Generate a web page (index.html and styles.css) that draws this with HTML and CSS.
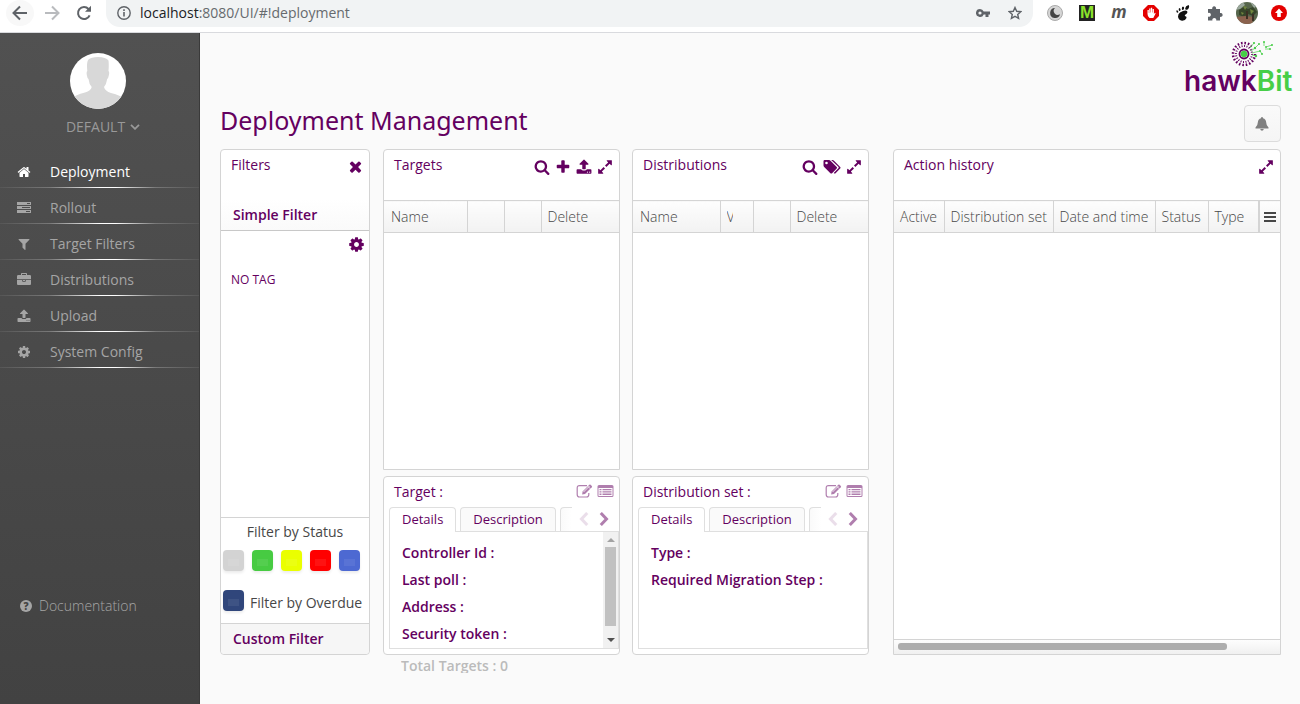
FILE: index.html
```html
<!DOCTYPE html>
<html lang="en">
<head>
<meta charset="utf-8">
<title>hawkBit - Deployment Management</title>
<link rel="stylesheet" href="styles.css">
</head>
<body>
<svg class="sprite" aria-hidden="true">
  <symbol id="i-search" viewBox="0 0 1792 1792"><path d="M1216 832q0-185-131.5-316.5t-316.5-131.5-316.5 131.5-131.5 316.5 131.5 316.5 316.5 131.5 316.5-131.5 131.5-316.5zm512 832q0 52-38 90t-90 38q-54 0-90-38l-343-342q-179 124-399 124-143 0-273.5-55.5t-225-150-150-225-55.5-273.5 55.5-273.5 150-225 225-150 273.5-55.5 273.5 55.5 225 150 150 225 55.5 273.5q0 220-124 399l343 343q37 37 37 90z"/></symbol>
  <symbol id="i-plus" viewBox="0 0 1792 1792"><path d="M1600 736v192q0 40-28 68t-68 28h-416v416q0 40-28 68t-68 28h-192q-40 0-68-28t-28-68v-416h-416q-40 0-68-28t-28-68v-192q0-40 28-68t68-28h416v-416q0-40 28-68t68-28h192q40 0 68 28t28 68v416h416q40 0 68 28t28 68z"/></symbol>
  <symbol id="i-upload" viewBox="0 0 1792 1792"><path d="M1344 1472q0-26-19-45t-45-19-45 19-19 45 19 45 45 19 45-19 19-45zm256 0q0-26-19-45t-45-19-45 19-19 45 19 45 45 19 45-19 19-45zm128-224v320q0 40-28 68t-68 28h-1472q-40 0-68-28t-28-68v-320q0-40 28-68t68-28h427q21 56 70.500 92t110.500 36h256q61 0 110.500-36t70.500-92h427q40 0 68 28t28 68zm-325-648q-17 40-59 40h-256v448q0 26-19 45t-45 19h-256q-26 0-45-19t-19-45v-448h-256q-42 0-59-40-17-39 14-69l448-448q18-19 45-19t45 19l448 448q31 30 14 69z"/></symbol>
  <symbol id="i-expand" viewBox="0 0 1792 1792"><path d="M883 1056q0 13-10 23l-332 332 144 144q19 19 19 45t-19 45-45 19h-448q-26 0-45-19t-19-45v-448q0-26 19-45t45-19 45 19l144 144 332-332q10-10 23-10t23 10l114 114q10 10 10 23zm781-864v448q0 26-19 45t-45 19-45-19l-144-144-332 332q-10 10-23 10t-23-10l-114-114q-10-10-10-23t10-23l332-332-144-144q-19-19-19-45t19-45 45-19h448q26 0 45 19t19 45z"/></symbol>
  <symbol id="i-times" viewBox="0 0 1792 1792"><path d="M1490 1322q0 40-28 68l-136 136q-28 28-68 28t-68-28l-294-294-294 294q-28 28-68 28t-68-28l-136-136q-28-28-28-68t28-68l294-294-294-294q-28-28-28-68t28-68l136-136q28-28 68-28t68 28l294 294 294-294q28-28 68-28t68 28l136 136q28 28 28 68t-28 68l-294 294 294 294q28 28 28 68z"/></symbol>
  <symbol id="i-cog" viewBox="0 0 1792 1792"><path d="M1152 896q0-106-75-181t-181-75-181 75-75 181 75 181 181 75 181-75 75-181zm512-109v222q0 12-8 23t-20 13l-185 28q-19 54-39 91 35 50 107 138 10 12 10 25t-9 23q-27 37-99 108t-94 71q-12 0-26-9l-138-108q-44 23-91 38-16 136-29 186-7 28-36 28h-222q-14 0-24.500-8.500t-11.500-21.500l-28-184q-49-16-90-37l-141 107q-10 9-25 9-14 0-25-11-126-114-165-168-7-10-7-23 0-12 8-23 15-21 51-66.500t54-70.500q-27-50-41-99l-183-27q-13-2-21-12.500t-8-23.500v-222q0-12 8-23t19-13l186-28q14-46 39-92-40-57-107-138-10-12-10-24 0-10 9-23 26-36 98.500-107.500t94.500-71.500q13 0 26 10l138 107q44-23 91-38 16-136 29-186 7-28 36-28h222q14 0 24.500 8.500t11.500 21.500l28 184q49 16 90 37l142-107q9-9 24-9 13 0 25 10 129 119 165 170 7 8 7 22 0 12-8 23-15 21-51 66.500t-54 70.500q26 50 41 98l183 28q13 2 21 12.500t8 23.500z"/></symbol>
  <symbol id="i-home" viewBox="0 0 1792 1792"><path d="M1472 992v480q0 26-19 45t-45 19h-384v-384h-256v384h-384q-26 0-45-19t-19-45v-480q0-1 .5-3t.5-3l575-474 575 474q1 2 1 6zm223-69l-62 74q-8 9-21 11h-3q-13 0-21-7l-692-577-692 577q-12 8-24 7-13-2-21-11l-62-74q-8-10-7-23.500t11-21.500l719-599q32-26 76-26t76 26l244 204v-195q0-14 9-23t23-9h192q14 0 23 9t9 23v408l219 182q10 8 11 21.500t-7 23.500z"/></symbol>
  <symbol id="i-filter" viewBox="0 0 1792 1792"><path d="M1595 295q17 41-14 70l-493 493v742q0 42-39 59-13 5-25 5-27 0-45-19l-256-256q-19-19-19-45v-486l-493-493q-31-29-14-70 17-39 59-39h1280q42 0 59 39z"/></symbol>
  <symbol id="i-case" viewBox="0 0 1792 1792"><path d="M640 256h512v-128h-512v128zm1152 640v480q0 66-47 113t-113 47h-1472q-66 0-113-47t-47-113v-480h672v160q0 26 19 45t45 19h320q26 0 45-19t19-45v-160h672zm-768 0v128h-256v-128h256zm768-480v384h-1792v-384q0-66 47-113t113-47h352v-160q0-40 28-68t68-28h576q40 0 68 28t28 68v160h352q66 0 113 47t47 113z"/></symbol>
  <symbol id="i-tasks" viewBox="0 0 14 14"><path fill-rule="evenodd" d="M0 1h14v3H0zM10 2v1h3v-1zM0 5h14v3H0zM5 6v1h8v-1zM0 9h14v3H0zM9 10v1h4v-1z"/></symbol>
  <symbol id="i-tags" viewBox="0 0 18 16"><path fill-rule="evenodd" d="M.5 2.200Q.5 1 1.700 1H6q.8 0 1.500.7l6.200 6.200q.8.800 0 1.600l-4.600 4.700q-.8.800-1.700 0L1.200 8Q.5 7.200.5 6.500zM3.500 2.700a1.300 1.300 0 1 0 0 2.600 1.300 1.300 0 0 0 0-2.600z"/><path d="M8.200 1h1.300q.8 0 1.500.7l6.200 6.200q.8.800 0 1.600l-4.600 4.700q-.9.900-1.900-.2l4.700-4.700q.7-.7 0-1.500z"/></symbol>
  <symbol id="i-edit" viewBox="0 0 16 14"><path fill="none" stroke="currentColor" stroke-width="1.200" d="M10.500 1.600H3Q.7 1.600.7 4v6.500Q.7 13 3 13h7q2.300 0 2.300-2.500V9"/><path d="M5.600 10.600l.5-3L12.800.8q.6-.6 1.300 0l1.200 1.200q.6.700 0 1.300L8.500 10z"/><path stroke="#fff" stroke-width=".8" d="M7 8l6-6M11.500 2.500l2.300 2.300"/></symbol>
  <symbol id="i-list" viewBox="0 0 16 14"><path fill-rule="evenodd" d="M1.500 1h13q1.500 0 1.500 1.500v9q0 1.500-1.500 1.500h-13Q0 13 0 11.500v-9Q0 1 1.500 1zM1 4v7.500q0 .5.500.5h13q.5 0 .5-.5V4z"/><path d="M2 5h2v1.300H2zM5 5h9v1.300H5zM2 7.300h2v1.300H2zM5 7.300h9v1.300H5zM2 9.600h2v1.300H2zM5 9.600h9v1.300H5z"/></symbol>
  <symbol id="i-bell" viewBox="0 0 14 14"><path d="M7 0q1 0 1 1.200Q11 2 11.200 5.500q.1 3.300 2.300 5V11.500H.5v-1q2.200-1.700 2.300-5Q3 2 6 1.200 6 0 7 0zM5.200 12h3.600Q8.500 13.800 7 13.800T5.200 12z"/></symbol>
  <symbol id="i-left" viewBox="0 0 10 14"><path fill="none" stroke="currentColor" stroke-width="3" d="M8.200 1L2.500 7l5.700 6"/></symbol>
  <symbol id="i-right" viewBox="0 0 10 14"><path fill="none" stroke="currentColor" stroke-width="3" d="M1.800 1l5.700 6-5.700 6"/></symbol>
</svg>

<header class="browser">
  <button class="nav-btn halo" aria-label="Back"><svg width="16" height="16" viewBox="0 0 16 16"><path class="ln" d="M15 8H2M8 1.500L1.500 8 8 14.500"/></svg></button>
  <button class="nav-btn faded" aria-label="Forward"><svg width="16" height="16" viewBox="0 0 16 16"><path class="ln" d="M1 8h13M8 1.500L14.500 8 8 14.500"/></svg></button>
  <button class="nav-btn" aria-label="Reload"><svg width="16" height="16" viewBox="0 0 16 16"><path class="ln" d="M13.600 10.300A6 6 0 1 1 12.500 4L14 5.500"/><path d="M15 .8v6H9z"/></svg></button>
  <div class="address">
    <svg width="14" height="14" viewBox="0 0 14 14"><circle class="ln thin" cx="7" cy="7" r="6.200"/><path d="M6.200 6h1.600v4.500H6.200zM6.200 3.300h1.600v1.600H6.200z"/></svg>
    <span class="url"><b>localhost</b>:8080/UI/#!deployment</span>
    <svg class="key" width="14" height="10" viewBox="0 0 14 10"><path fill-rule="evenodd" d="M4 1a4 4 0 0 1 3.700 2.500H14v3h-1.500V9h-3V6.500H7.700A4 4 0 1 1 4 1zm0 2.400a1.600 1.600 0 1 0 0 3.200 1.600 1.600 0 0 0 0-3.200z"/></svg>
    <svg width="14" height="14" viewBox="0 0 14 14"><path class="ln thin" d="M7 1.500l1.700 3.800 4.100.4-3.100 2.700.9 4L7 10.300l-3.600 2.100.9-4L1.200 5.700l4.100-.4z"/></svg>
  </div>
  <div class="exts">
    <svg width="16" height="16" viewBox="0 0 16 16"><circle cx="8" cy="8" r="7.500" fill="#d5d5d5" stroke="#aaa"/><path fill="#444" d="M8 3a5 5 0 1 0 5 6.200A4 4 0 0 1 8 3z"/></svg>
    <span class="ext-m">M</span>
    <span class="ext-i">m</span>
    <svg width="16" height="16" viewBox="0 0 16 16"><path fill="#e40000" d="M5 0h6l5 5v6l-5 5H5l-5-5V5z"/><path fill="#fff" d="M4.500 5h1.300v3h.4V3.500h1.300V7.500h.4V2.800h1.300v4.700h.4V4h1.300v5l1-1.200q1 0 .6 1L10.300 13H6.500q-2-1.500-2-4z"/></svg>
    <svg width="14" height="16" viewBox="0 0 14 16"><path fill="#111" d="M12.500 0q1.500 1.500-.5 4.300-3 1.400-2.800-1Q9.500.8 12.500 0zM7 1.500q1.800.5.700 3-1.600 1.200-1.900-.6Q5.700 1.800 7 1.500zM3.500 3q1.600.6 1 2.600-1.400.8-1.800-.7Q2.600 3.300 3.500 3zM.8 5.300q1.500.2 1.600 2Q1.200 8.400.5 7 .1 5.500.8 5.300zM4 7.500q5-3 7-1.500 1.300 1.800-1.500 3.600-1.600 1-.2 1.700 1.500 0 1.200 1.800Q9.300 16 6 15.800q-3.500-.6-4-4Q2 9 4 7.500z"/></svg>
    <svg width="16" height="16" viewBox="0 0 16 16"><path fill="#5f6368" d="M1 4h4.300a2 2 0 1 1 3.700 0H13v4a2 2 0 1 1 0 3.800V15.500H9.200a2 2 0 1 0-3.800 0H1v-4a2 2 0 1 0 0-3.600z"/></svg>
    <svg class="photo" width="22" height="22" viewBox="0 0 22 22"><clipPath id="ph"><circle cx="11" cy="11" r="11"/></clipPath><g clip-path="url(#ph)"><path fill="#56664c" d="M0 0h22v22H0z"/><path fill="#9aa79c" d="M0 2l7-2 2 3-5 4-4 1zM14 0l7 4-3 2z"/><path fill="#36452a" d="M3 8l5-3 4 2 5-2 4 5-4 4-5-2-4 3-5-2z"/><path fill="#70863e" d="M7 4l4 1-2 3zM14 7l4 2-3 3zM5 10l3 1-2 2z"/><path fill="#8b624e" d="M0 15l9-1 9 1-2 7H0z"/><path fill="#3b3024" d="M10 9h2v8h-2zM16 12h2v7h-2z"/></g></svg>
    <svg width="16" height="16" viewBox="0 0 16 16"><circle cx="8" cy="8" r="8" fill="#e40000"/><path fill="#fff" d="M8 3.500l4 4.500H9.800v4H6.200V8H4z"/></svg>
  </div>
</header>

<div class="app">
  <aside class="sidebar">
    <svg class="avatar" width="56" height="56" viewBox="0 0 56 56"><clipPath id="av"><circle cx="28" cy="28" r="28"/></clipPath><circle cx="28" cy="28" r="28" fill="#fff"/><path clip-path="url(#av)" fill="#d8d8d8" d="M28 4q8 0 10.500 3.500Q39 12 38.500 18q1.200 1 .3 4.500-.5 3-1.600 3.500-.7 5-3.200 8 1 4 7 6 10 2.500 13 5.500V58H2V45.500Q5 42 15 39.500q6-2 6.700-5.500-2.700-3-3.200-8-1.200-.5-1.700-4-.5-3.500.5-4-1-9 1.200-11.500Q21 4 28 4z"/></svg>
    <button class="user">DEFAULT <svg width="10" height="6" viewBox="0 0 10 6"><path fill="none" stroke="currentColor" stroke-width="1.800" d="M1 .8l4 4 4-4"/></svg></button>
    <nav class="menu">
      <a href="#!deployment" class="active"><svg><use href="#i-home"/></svg>Deployment</a>
      <a href="#!rollout"><svg><use href="#i-tasks"/></svg>Rollout</a>
      <a href="#!targetfilters"><svg><use href="#i-filter"/></svg>Target Filters</a>
      <a href="#!distributions"><svg><use href="#i-case"/></svg>Distributions</a>
      <a href="#!upload"><svg><use href="#i-upload"/></svg>Upload</a>
      <a href="#!config"><svg><use href="#i-cog"/></svg>System Config</a>
    </nav>
    <a class="docs" href="#docs"><span class="help">?</span>Documentation</a>
  </aside>

  <main class="main">
    <div class="brand">
      <svg width="112" height="56" viewBox="0 0 112 56" role="img" aria-label="hawkBit">
        <g fill="none" stroke="#640060"><circle cx="60" cy="17" r="11" stroke-width="2.500" stroke-dasharray="1.600 1.860"/><circle cx="60" cy="17" r="8" stroke-width="2" stroke-dasharray="1 1.500"/><circle cx="60" cy="17" r="4.500" stroke-width="1.800"/></g>
        <path fill="#fafafa" d="M67 4l9 2v12l-7-2z"/>
        <circle cx="60" cy="17" r="3.200" fill="#47ce47"/>
        <g fill="#47ce47"><circle cx="70" cy="6" r="1.100"/><circle cx="75" cy="7" r="1"/><circle cx="80" cy="5" r="1"/><circle cx="82" cy="10" r="1"/><circle cx="88" cy="8" r="1"/><circle cx="86" cy="12" r="1"/><circle cx="71" cy="11" r="1.200"/><circle cx="76" cy="14" r="1"/><circle cx="72" cy="19" r="1.200"/><circle cx="78" cy="17" r="1"/></g>
        <path fill="none" stroke="#47ce47" stroke-width=".7" d="M66 11l4-5M67 14l4-3 4-4M68 16l8-2M68 18l4 1M76 14l2 3M80 5v4M82 10l6-2M81 12h5"/>
        <text class="logo-text" x="0" y="54"><tspan fill="#640060">hawk</tspan><tspan fill="#47ce47">Bit</tspan></text>
      </svg>
    </div>
    <div class="title-row">
      <h1>Deployment Management</h1>
      <button class="bell" aria-label="Notifications"><svg width="14" height="14"><use href="#i-bell"/></svg></button>
    </div>

    <div class="columns">
      <section class="panel filters">
        <div class="panel-head"><h2>Filters</h2><div class="tools"><button aria-label="Close"><svg><use href="#i-times"/></svg></button></div></div>
        <button class="accordion simple">Simple Filter</button>
        <div class="tags">
          <button class="icon-btn" aria-label="Configure tags"><svg><use href="#i-cog"/></svg></button>
          <button class="notag">NO TAG</button>
        </div>
        <div class="status">
          <p>Filter by Status</p>
          <div class="swatches">
            <button class="sw grey" aria-label="Unknown"></button><button class="sw green" aria-label="In sync"></button><button class="sw yellow" aria-label="Pending"></button><button class="sw red" aria-label="Error"></button><button class="sw blue" aria-label="Registered"></button>
          </div>
          <div class="overdue"><button class="sw navy" id="overdue"></button><label for="overdue">Filter by Overdue</label></div>
        </div>
        <button class="accordion custom">Custom Filter</button>
      </section>

      <div class="stack">
        <section class="panel grid-panel">
          <div class="panel-head"><h2>Targets</h2><div class="tools"><button aria-label="Search"><svg><use href="#i-search"/></svg></button><button aria-label="Add"><svg><use href="#i-plus"/></svg></button><button aria-label="Upload"><svg><use href="#i-upload"/></svg></button><button aria-label="Maximize"><svg><use href="#i-expand"/></svg></button></div></div>
          <table><colgroup><col><col class="c37"><col class="c37"><col class="c78"></colgroup><thead><tr><th>Name</th><th></th><th></th><th>Delete</th></tr></thead></table>
        </section>
        <section class="panel details">
          <div class="details-head"><h2>Target :</h2><div class="tools pale"><button aria-label="Edit"><svg><use href="#i-edit"/></svg></button><button aria-label="Metadata"><svg><use href="#i-list"/></svg></button></div></div>
          <div class="tabs"><button class="tab on">Details</button><button class="tab">Description</button><span class="tab more"></span><span class="arrows"><button class="dim" aria-label="Previous"><svg><use href="#i-left"/></svg></button><button aria-label="Next"><svg><use href="#i-right"/></svg></button></span></div>
          <div class="sheet"><ul><li>Controller Id :</li><li>Last poll :</li><li>Address :</li><li>Security token :</li></ul>
            <div class="vscroll"><i class="up"></i><i class="thumb"></i><i class="down"></i></div></div>
        </section>
      </div>

      <div class="stack">
        <section class="panel grid-panel">
          <div class="panel-head"><h2>Distributions</h2><div class="tools"><button aria-label="Search"><svg><use href="#i-search"/></svg></button><button aria-label="Tags" class="wide"><svg><use href="#i-tags"/></svg></button><button aria-label="Maximize"><svg><use href="#i-expand"/></svg></button></div></div>
          <table><colgroup><col><col class="c33"><col class="c37"><col class="c78"></colgroup><thead><tr><th>Name</th><th><span class="clip">V</span></th><th></th><th>Delete</th></tr></thead></table>
        </section>
        <section class="panel details">
          <div class="details-head"><h2>Distribution set :</h2><div class="tools pale"><button aria-label="Edit"><svg><use href="#i-edit"/></svg></button><button aria-label="Metadata"><svg><use href="#i-list"/></svg></button></div></div>
          <div class="tabs"><button class="tab on">Details</button><button class="tab">Description</button><span class="tab more"></span><span class="arrows"><button class="dim" aria-label="Previous"><svg><use href="#i-left"/></svg></button><button aria-label="Next"><svg><use href="#i-right"/></svg></button></span></div>
          <div class="sheet"><ul><li>Type :</li><li>Required Migration Step :</li></ul></div>
        </section>
      </div>

      <section class="panel grid-panel history">
        <div class="panel-head"><h2>Action history</h2><div class="tools"><button aria-label="Maximize"><svg><use href="#i-expand"/></svg></button></div></div>
        <table><colgroup><col class="c50"><col class="c109"><col class="c102"><col class="c53"><col><col class="c21"></colgroup><thead><tr><th>Active</th><th>Distribution set</th><th>Date and time</th><th>Status</th><th>Type</th><th class="burger"><button aria-label="Columns"><svg width="12" height="10" viewBox="0 0 12 10"><path d="M0 0h12v2H0zM0 4h12v2H0zM0 8h12v2H0z"/></svg></button></th></tr></thead></table>
        <div class="hscroll"><i></i></div>
      </section>
    </div>
    <footer class="total">Total Targets : 0</footer>
  </main>
</div>
</body>
</html>
```
FILE: styles.css
```css
* { box-sizing: border-box; }
body {
  margin: 0;
  min-height: 100vh;
  display: flex;
  flex-direction: column;
  font: 14px/20px "Open Sans", sans-serif;
  color: #474747;
  background: #fafafa;
}
button { font: inherit; color: inherit; background: none; border: 0; padding: 0; margin: 0; }
a { color: inherit; text-decoration: none; }
h1, h2, p, ul { margin: 0; padding: 0; font-weight: 400; list-style: none; }
svg { display: block; fill: currentColor; flex: none; }
.sprite { position: absolute; width: 0; height: 0; }

/* browser toolbar */
.browser {
  display: flex;
  align-items: center;
  height: 33px;
  padding: 0 5px 6px 6px;
  border-bottom: 1px solid #d9dade;
  background: #fff;
  color: #5f6368;
}
.ln { fill: none; stroke: currentColor; stroke-width: 2; }
.ln.thin { stroke-width: 1.4; }
.nav-btn { width: 28px; height: 26px; margin-right: 4px; display: flex; align-items: center; justify-content: center; }
.halo { background: #f8f8f8; border-radius: 50%; }
.faded { color: #b9bbbe; }
.address {
  flex: 1;
  display: flex;
  align-items: center;
  height: 27px;
  padding: 0 11px;
  margin-left: 4px;
  background: #f1f3f4;
  border-radius: 0 0 14px 14px;
}
.url { flex: 1; margin-left: 9px; font: 14px/20px "Open Sans", sans-serif; color: #666a6e; }
.url b { font-weight: 400; color: #202124; }
.key { margin-right: 18px; }
.exts { display: grid; grid-template-columns: repeat(8, 32px); align-items: center; justify-items: center; margin-left: 6px; }
.ext-m { width: 16px; height: 16px; background: #222; color: #8be22a; font: bold 17px/16px "Liberation Sans", sans-serif; text-align: center; }
.ext-i { font: italic bold 17px/16px "Open Sans", sans-serif; color: #555; padding-bottom: 2px; }

.app { flex: 1; display: flex; }

/* sidebar */
.sidebar {
  width: 200px;
  flex: none;
  display: flex;
  flex-direction: column;
  padding-top: 20px;
  border-right: 1px solid #3a3a3a;
  background: linear-gradient(#515151, #424242);
  color: #a5a5a5;
}
.avatar { margin-left: 70px; }
.user { display: flex; align-items: center; align-self: center; gap: 5px; margin: 8px 0 15px 7px; color: #999; }
.menu a {
  display: flex;
  align-items: center;
  height: 36px;
  padding: 4px 0 0 17px;
  gap: 19px;
  border-bottom: 1px solid;
  border-image: linear-gradient(90deg, #555, #777 25%, #fff 50%, #fff 58%, #777 78%, #555) 1;
}
.menu svg { width: 14px; height: 14px; }
.menu .active { color: #fff; }
.docs { display: flex; align-items: center; gap: 7px; margin-top: auto; padding: 0 0 88px 20px; font-weight: 300; }
.help { width: 12px; height: 12px; border-radius: 50%; background: #a5a5a5; color: #444; font-weight: 800; font-size: 10px; line-height: 12px; text-align: center; }

/* main area */
.main { flex: 1; min-width: 0; display: flex; flex-direction: column; color: #640060; }
.brand { display: flex; justify-content: flex-end; padding: 4px 4px 0 0; }
.logo-text { font: 600 28px "Inter", sans-serif; }
.title-row { display: flex; justify-content: space-between; align-items: center; margin: 12px 19px 7px 20px; }
h1 { font-family: "Noto Sans", "Open Sans", sans-serif; font-size: 25px; line-height: 30px; padding-bottom: 7px; }
h2 { font-size: 14px; line-height: 20px; }
.bell {
  width: 37px; height: 37px; padding-right: 2px; display: grid; place-items: center;
  border: 1px solid #dcdcdc; border-radius: 4px; background: linear-gradient(#fafafa, #f5f5f5); color: #808080;
}
.columns {
  flex: 1;
  display: grid;
  grid-template-columns: 151px minmax(0, 237fr) minmax(0, 237fr) minmax(0, 400fr);
  gap: 12px;
  margin: 0 19px 0 20px;
}
.stack { display: flex; flex-direction: column; gap: 6px; }
.panel { background: #fff; border: 1px solid #d4d4d4; border-radius: 4px; display: flex; flex-direction: column; }
.grid-panel { border-radius: 4px 4px 0 0; flex: 1; }
.filters { width: 150px; }
.history { margin-left: 12px; }
.panel-head { display: flex; justify-content: space-between; padding: 5px 6px 0 10px; height: 50px; }
.filters .panel-head { height: 49px; padding-right: 5px; }
.tools { display: flex; gap: 5px; height: 23px; align-items: center; }
.tools svg { width: 16px; height: 16px; }
.tools .wide svg { width: 18px; }
.filters .tools svg { width: 17px; height: 17px; }
.accordion { text-align: left; padding: 0 12px; font-weight: 600; height: 32px; }
.simple { border-bottom: 1px solid #c8c8c8; background: linear-gradient(#fff, #fafafa); }
.tags { flex: 1; display: flex; flex-direction: column; align-items: flex-start; }
.icon-btn { align-self: flex-end; margin: 5px 4px 0 0; }
.icon-btn svg { width: 17px; height: 17px; }
.notag { margin: 17px 0 0 10px; font-size: 12px; }
.status { border-top: 1px solid #d4d4d4; color: #474747; padding: 4px 2px 10px; }
.status p { text-align: center; }
.swatches { display: flex; gap: 8px; margin: 8px 0 19px; }
.overdue { display: flex; gap: 6px; align-items: flex-start; white-space: nowrap; }
.overdue label { padding-top: 3px; }
.sw { width: 21px; height: 21px; border-radius: 4px; box-shadow: 0 2px 3px rgba(0, 0, 0, .08); flex: none; padding: 9px 5px 5px; }
.sw::before { content: ""; display: block; height: 7px; background: rgba(255, 255, 255, .07); }
.grey { background: #d3d3d3; }
.green { background: #47cb42; }
.yellow { background: #eaff00; }
.red { background: #f00; }
.blue { background: #4d69d2; }
.navy { background: #30467b; }
.custom { border-top: 1px solid #d4d4d4; background: #f6f6f6; height: 31px; border-radius: 0 0 4px 4px; }

/* tables */
table { width: 100%; table-layout: fixed; border-collapse: collapse; border-top: 1px solid #d4d4d4; border-bottom: 1px solid #d4d4d4; }
th { height: 32px; padding: 0 0 0 7px; text-align: left; font-weight: 300; color: #474747; background: linear-gradient(#fdfdfd, #f2f2f2); white-space: nowrap; overflow: hidden; }
th + th { border-left: 1px solid #d4d4d4; padding-left: 6px; }
.history th { padding-left: 6px; }
.c21 { width: 21px; } .c33 { width: 33px; } .c37 { width: 37px; } .c50 { width: 50px; } .c53 { width: 53px; }
.c78 { width: 78px; } .c102 { width: 102px; } .c109 { width: 109px; }
.clip { display: block; width: 6px; overflow: hidden; }
.history .burger { border-left-width: 2px; padding: 0 0 0 4px; }
.hscroll { margin-top: auto; height: 15px; border-top: 1px solid #d4d4d4; background: linear-gradient(#fdfdfd, #f0f0f0); padding: 3px 4px; }
.hscroll i { display: block; width: 87%; height: 7px; border-radius: 3px; background: #adadad; }

/* detail panels */
.details { height: 179px; flex: none; padding: 0 0 5px 5px; }
.details-head { display: flex; justify-content: space-between; padding: 5px 5px 0 5px; height: 30px; }
.details-head .tools { gap: 4px; }
.pale { opacity: .5; }
.tools.pale { height: 18px; }
.pale svg { width: 17px; height: 14px; }
.tabs { display: flex; gap: 4px; height: 25px; font-size: 13px; line-height: 22px; overflow: hidden; }
.tab { height: 24px; padding: 0 12px 1px; border: 1px solid #dfdfdf; border-bottom: 0; border-radius: 4px 4px 0 0; background: #fafafa; }
.on { height: 25px; padding-bottom: 2px; background: #fff; position: relative; z-index: 1; }
.more { flex: none; width: 12px; padding: 0; border-right: 0; border-radius: 4px 0 0; background: linear-gradient(90deg, #fafafa, #fff); }
.arrows { display: flex; align-items: flex-start; gap: 10px; margin-left: auto; padding: 5px 10px 0 0; opacity: .5; }
.arrows svg { width: 10px; height: 14px; }
.arrows .dim { opacity: .25; }
.sheet { flex: 1; margin-top: -1px; border: 1px solid #dfdfdf; display: flex; overflow: hidden; }
.sheet ul { flex: 1; padding: 7px 12px 0; font-weight: 600; line-height: 27px; }
.sheet li { height: 27px; }
.vscroll { width: 15px; background: #f1f1f1; display: flex; flex-direction: column; align-items: center; justify-content: space-between; padding: 6px 0 6px; }
.up, .down { border: 4px solid transparent; border-top: 0; border-bottom-color: #a3a3a3; }
.down { border-top: 4px solid #505050; border-bottom: 0; }
.thumb { width: 11px; height: 79px; background: #c1c1c1; margin-bottom: 8px; }
.total { margin-left: 201px; height: 18px; margin-bottom: 31px; overflow: hidden; font-weight: 600; line-height: 22px; color: #bbb; }
```
